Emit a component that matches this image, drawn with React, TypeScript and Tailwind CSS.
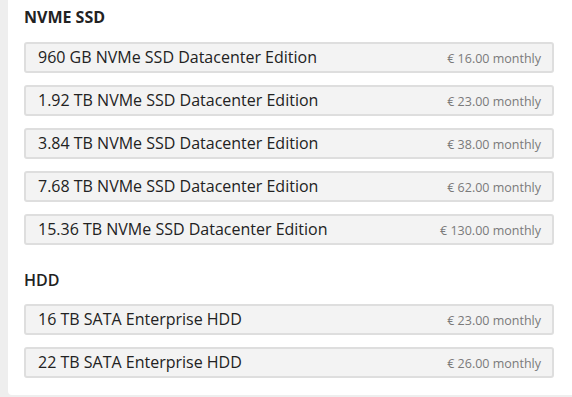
const ssd = [
  { name: '960 GB NVMe SSD Datacenter Edition', price: '€ 16.00 monthly' },
  { name: '1.92 TB NVMe SSD Datacenter Edition', price: '€ 23.00 monthly' },
  { name: '3.84 TB NVMe SSD Datacenter Edition', price: '€ 38.00 monthly' },
  { name: '7.68 TB NVMe SSD Datacenter Edition', price: '€ 62.00 monthly' },
  { name: '15.36 TB NVMe SSD Datacenter Edition', price: '€ 130.00 monthly' },
]

const hdd = [
  { name: '16 TB SATA Enterprise HDD', price: '€ 23.00 monthly' },
  { name: '22 TB SATA Enterprise HDD', price: '€ 26.00 monthly' },
]

function Row({ name, price }: { name: string; price: string }) {
  return (
    <div className="flex h-[31px] items-baseline justify-between rounded-[3px] border-2 border-[#dedede] bg-[#f3f3f3] pl-[12px] pr-[11px]">
      <span className="text-[16px] leading-[26px] text-[#222]">{name}</span>
      <span className="text-[12.5px] leading-[26px] text-[#7a7a7a]">{price}</span>
    </div>
  )
}

export default function App() {
  return (
    <div className="h-[397px] w-[572px] overflow-hidden bg-[#eeeeee] pl-[8px] font-['Open_Sans',sans-serif]">
      <div className="h-[395px] rounded-bl-[4px] bg-white pl-[16px] pr-[18px]">
        <h2 className="pt-[6px] text-[16px] font-bold leading-[22px] text-[#222]">NVME SSD</h2>
        <div className="mt-[14px] flex flex-col gap-[12px]">
          {ssd.map((d) => (
            <Row key={d.name} {...d} />
          ))}
        </div>
        <h2 className="mt-[24px] text-[16px] font-semibold leading-[22px] text-[#222]">HDD</h2>
        <div className="mt-[13px] flex flex-col gap-[12px]">
          {hdd.map((d) => (
            <Row key={d.name} {...d} />
          ))}
        </div>
      </div>
    </div>
  )
}
